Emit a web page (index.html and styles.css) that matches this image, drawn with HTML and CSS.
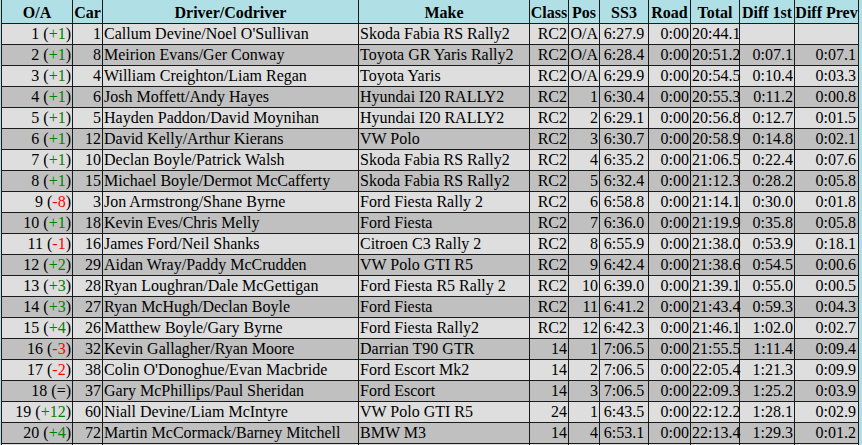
FILE: index.html
```html
<!DOCTYPE html>
<html>
<head>
<meta charset="utf-8">
<title>SS3 Results</title>
<link rel="stylesheet" href="styles.css">
</head>
<body>
<table class="results">
<thead>
<tr>
<th class="w-oa">O/A</th><th class="w-car">Car</th><th class="w-drv">Driver/Codriver</th><th class="w-make">Make</th><th class="w-cls">Class</th><th class="w-pos">Pos</th><th class="w-ss">SS3</th><th class="w-road">Road</th><th class="w-tot">Total</th><th class="w-d1">Diff 1st</th><th class="w-dp">Diff Prev</th>
</tr>
</thead>
<tbody>
<tr class="lt"><td class="r">1 (<span class="up">+1</span>)</td><td class="r">1</td><td>Callum Devine/Noel O'Sullivan</td><td>Skoda Fabia RS Rally2</td><td class="r">RC2</td><td class="r">O/A</td><td class="ss">6:27.9</td><td class="r">0:00</td><td class="r">20:44.1</td><td class="r"></td><td class="r dp"></td></tr>
<tr class="dk"><td class="r">2 (<span class="up">+1</span>)</td><td class="r">8</td><td>Meirion Evans/Ger Conway</td><td>Toyota GR Yaris Rally2</td><td class="r">RC2</td><td class="r">O/A</td><td class="ss">6:28.4</td><td class="r">0:00</td><td class="r">20:51.2</td><td class="r">0:07.1</td><td class="r dp">0:07.1</td></tr>
<tr class="lt"><td class="r">3 (<span class="up">+1</span>)</td><td class="r">4</td><td>William Creighton/Liam Regan</td><td>Toyota Yaris</td><td class="r">RC2</td><td class="r">O/A</td><td class="ss">6:29.9</td><td class="r">0:00</td><td class="r">20:54.5</td><td class="r">0:10.4</td><td class="r dp">0:03.3</td></tr>
<tr class="dk"><td class="r">4 (<span class="up">+1</span>)</td><td class="r">6</td><td>Josh Moffett/Andy Hayes</td><td>Hyundai I20 RALLY2</td><td class="r">RC2</td><td class="r">1</td><td class="ss">6:30.4</td><td class="r">0:00</td><td class="r">20:55.3</td><td class="r">0:11.2</td><td class="r dp">0:00.8</td></tr>
<tr class="lt"><td class="r">5 (<span class="up">+1</span>)</td><td class="r">5</td><td>Hayden Paddon/David Moynihan</td><td>Hyundai I20 RALLY2</td><td class="r">RC2</td><td class="r">2</td><td class="ss">6:29.1</td><td class="r">0:00</td><td class="r">20:56.8</td><td class="r">0:12.7</td><td class="r dp">0:01.5</td></tr>
<tr class="dk"><td class="r">6 (<span class="up">+1</span>)</td><td class="r">12</td><td>David Kelly/Arthur Kierans</td><td>VW Polo</td><td class="r">RC2</td><td class="r">3</td><td class="ss">6:30.7</td><td class="r">0:00</td><td class="r">20:58.9</td><td class="r">0:14.8</td><td class="r dp">0:02.1</td></tr>
<tr class="lt"><td class="r">7 (<span class="up">+1</span>)</td><td class="r">10</td><td>Declan Boyle/Patrick Walsh</td><td>Skoda Fabia RS Rally2</td><td class="r">RC2</td><td class="r">4</td><td class="ss">6:35.2</td><td class="r">0:00</td><td class="r">21:06.5</td><td class="r">0:22.4</td><td class="r dp">0:07.6</td></tr>
<tr class="dk"><td class="r">8 (<span class="up">+1</span>)</td><td class="r">15</td><td>Michael Boyle/Dermot McCafferty</td><td>Skoda Fabia RS Rally2</td><td class="r">RC2</td><td class="r">5</td><td class="ss">6:32.4</td><td class="r">0:00</td><td class="r">21:12.3</td><td class="r">0:28.2</td><td class="r dp">0:05.8</td></tr>
<tr class="lt"><td class="r">9 (<span class="dn">-8</span>)</td><td class="r">3</td><td>Jon Armstrong/Shane Byrne</td><td>Ford Fiesta Rally 2</td><td class="r">RC2</td><td class="r">6</td><td class="ss">6:58.8</td><td class="r">0:00</td><td class="r">21:14.1</td><td class="r">0:30.0</td><td class="r dp">0:01.8</td></tr>
<tr class="dk"><td class="r">10 (<span class="up">+1</span>)</td><td class="r">18</td><td>Kevin Eves/Chris Melly</td><td>Ford Fiesta</td><td class="r">RC2</td><td class="r">7</td><td class="ss">6:36.0</td><td class="r">0:00</td><td class="r">21:19.9</td><td class="r">0:35.8</td><td class="r dp">0:05.8</td></tr>
<tr class="lt"><td class="r">11 (<span class="dn">-1</span>)</td><td class="r">16</td><td>James Ford/Neil Shanks</td><td>Citroen C3 Rally 2</td><td class="r">RC2</td><td class="r">8</td><td class="ss">6:55.9</td><td class="r">0:00</td><td class="r">21:38.0</td><td class="r">0:53.9</td><td class="r dp">0:18.1</td></tr>
<tr class="dk"><td class="r">12 (<span class="up">+2</span>)</td><td class="r">29</td><td>Aidan Wray/Paddy McCrudden</td><td>VW Polo GTI R5</td><td class="r">RC2</td><td class="r">9</td><td class="ss">6:42.4</td><td class="r">0:00</td><td class="r">21:38.6</td><td class="r">0:54.5</td><td class="r dp">0:00.6</td></tr>
<tr class="lt"><td class="r">13 (<span class="up">+3</span>)</td><td class="r">28</td><td>Ryan Loughran/Dale McGettigan</td><td>Ford Fiesta R5 Rally 2</td><td class="r">RC2</td><td class="r">10</td><td class="ss">6:39.0</td><td class="r">0:00</td><td class="r">21:39.1</td><td class="r">0:55.0</td><td class="r dp">0:00.5</td></tr>
<tr class="dk"><td class="r">14 (<span class="up">+3</span>)</td><td class="r">27</td><td>Ryan McHugh/Declan Boyle</td><td>Ford Fiesta</td><td class="r">RC2</td><td class="r">11</td><td class="ss">6:41.2</td><td class="r">0:00</td><td class="r">21:43.4</td><td class="r">0:59.3</td><td class="r dp">0:04.3</td></tr>
<tr class="lt"><td class="r">15 (<span class="up">+4</span>)</td><td class="r">26</td><td>Matthew Boyle/Gary Byrne</td><td>Ford Fiesta Rally2</td><td class="r">RC2</td><td class="r">12</td><td class="ss">6:42.3</td><td class="r">0:00</td><td class="r">21:46.1</td><td class="r">1:02.0</td><td class="r dp">0:02.7</td></tr>
<tr class="dk"><td class="r">16 (<span class="dn">-3</span>)</td><td class="r">32</td><td>Kevin Gallagher/Ryan Moore</td><td>Darrian T90 GTR</td><td class="r">14</td><td class="r">1</td><td class="ss">7:06.5</td><td class="r">0:00</td><td class="r">21:55.5</td><td class="r">1:11.4</td><td class="r dp">0:09.4</td></tr>
<tr class="lt"><td class="r">17 (<span class="dn">-2</span>)</td><td class="r">38</td><td>Colin O'Donoghue/Evan Macbride</td><td>Ford Escort Mk2</td><td class="r">14</td><td class="r">2</td><td class="ss">7:06.5</td><td class="r">0:00</td><td class="r">22:05.4</td><td class="r">1:21.3</td><td class="r dp">0:09.9</td></tr>
<tr class="dk"><td class="r">18 (=)</td><td class="r">37</td><td>Gary McPhillips/Paul Sheridan</td><td>Ford Escort</td><td class="r">14</td><td class="r">3</td><td class="ss">7:06.5</td><td class="r">0:00</td><td class="r">22:09.3</td><td class="r">1:25.2</td><td class="r dp">0:03.9</td></tr>
<tr class="lt"><td class="r">19 (<span class="up">+12</span>)</td><td class="r">60</td><td>Niall Devine/Liam McIntyre</td><td>VW Polo GTI R5</td><td class="r">24</td><td class="r">1</td><td class="ss">6:43.5</td><td class="r">0:00</td><td class="r">22:12.2</td><td class="r">1:28.1</td><td class="r dp">0:02.9</td></tr>
<tr class="dk"><td class="r">20 (<span class="up">+4</span>)</td><td class="r">72</td><td>Martin McCormack/Barney Mitchell</td><td>BMW M3</td><td class="r">14</td><td class="r">4</td><td class="ss">6:53.1</td><td class="r">0:00</td><td class="r">22:13.4</td><td class="r">1:29.3</td><td class="r dp">0:01.2</td></tr>
<tr class="lt"><td></td><td></td><td></td><td></td><td></td><td></td><td></td><td></td><td></td><td></td><td></td></tr>
</tbody>
</table>
</body>
</html>
```

FILE: styles.css
```css
html, body {
  margin: 0;
  padding: 0;
  background: #b0e0e6;
  overflow: hidden;
}

body {
  padding-left: 1px;
  font-family: "Liberation Serif", "Times New Roman", serif;
  font-size: 16px;
  color: #000;
}

.results {
  table-layout: fixed;
  box-sizing: border-box;
  width: 858px;
  border-collapse: separate;
  border-spacing: 0;
  border-left: 1px solid #1a1a1a;
}

.results th,
.results td {
  box-sizing: border-box;
  border-right: 1px solid #1a1a1a;
  border-bottom: 1px solid #1a1a1a;
  white-space: nowrap;
  overflow: visible;
}

.results th {
  height: 24px;
  padding: 4px 0 0;
  vertical-align: top;
  text-align: center;
  font-weight: bold;
  background: #b0e0e6;
}

.results td {
  height: 21px;
  padding: 0 1px;
  vertical-align: middle;
  text-align: left;
}

.w-oa { width: 71px; }
.w-car { width: 30px; }
.w-drv { width: 256px; }
.w-make { width: 171px; }
.w-cls { width: 39px; }
.w-pos { width: 31px; }
.w-ss { width: 49px; }
.w-road { width: 42px; }
.w-tot { width: 49px; }
.w-d1 { width: 55px; }
.w-dp { width: 64px; }

.results td.r { text-align: right; }
.results td.ss { text-align: center; }
.results td.dp { padding-right: 2px; }

.lt td { background: #dedede; }
.dk td { background: #c0c0c0; }

.up { color: #008000; }
.dn { color: #ff0000; }
```
